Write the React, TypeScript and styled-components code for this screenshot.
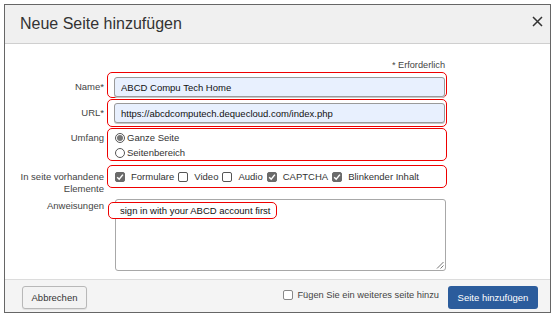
import React from 'react';
import styled, { createGlobalStyle } from 'styled-components';

const GlobalStyle = createGlobalStyle`
  html, body {
    margin: 0;
    padding: 0;
    background: #ffffff;
  }
  body {
    font-family: 'Liberation Sans', Arial, sans-serif;
    font-size: 9.5px;
    color: #333;
  }
  * {
    box-sizing: border-box;
  }
`;

type CheckItem = { label: string; checked: boolean };

const elements: CheckItem[] = [
  { label: 'Formulare', checked: true },
  { label: 'Video', checked: false },
  { label: 'Audio', checked: false },
  { label: 'CAPTCHA', checked: true },
  { label: 'Blinkender Inhalt', checked: true },
];

const CheckMark = () => (
  <svg width="8" height="8" viewBox="0 0 8 8" aria-hidden="true">
    <path d="M1.2 4.2 L3.2 6.2 L6.9 1.6" fill="none" stroke="#fff" strokeWidth="1.5" />
  </svg>
);

export default function App() {
  return (
    <>
      <GlobalStyle />
      <SPage>
        <SDialog role="dialog" aria-labelledby="dlg-title">
          <SHeader>
            <STitle id="dlg-title">Neue Seite hinzufügen</STitle>
            <SClose aria-label="Schließen">
              <svg width="11" height="11" viewBox="0 0 11 11">
                <path d="M1 1 L10 10 M10 1 L1 10" stroke="#333" strokeWidth="1.5" />
              </svg>
            </SClose>
          </SHeader>

          <SBody>
            <SRequired>* Erforderlich</SRequired>

            <SRow $mt={1}>
              <SLabel $pt={9}>Name*</SLabel>
              <SMark $pad="4px 1px 0 6px">
                <SInput defaultValue="ABCD Compu Tech Home" />
              </SMark>
            </SRow>

            <SRow $mt={1}>
              <SLabel $pt={8}>URL*</SLabel>
              <SMark $pad="3px 1px 3px 6px">
                <SInput defaultValue="https://abcdcomputech.dequecloud.com/index.php" />
              </SMark>
            </SRow>

            <SRow $mt={1}>
              <SLabel $pt={4}>Umfang</SLabel>
              <SMark $pad="1px 0 0 7px">
                <SOption>
                  <SRadio $checked />
                  Ganze Seite
                </SOption>
                <SOption>
                  <SRadio />
                  Seitenbereich
                </SOption>
              </SMark>
            </SRow>

            <SRow $mt={4}>
              <SLabel $pt={6}>
                In seite vorhandene
                <br />
                Elemente
              </SLabel>
              <SMark $pad="0 0 0 7px">
                <SChecks>
                  {elements.map((el) => (
                    <SCheckItem key={el.label}>
                      <SBox $checked={el.checked}>{el.checked && <CheckMark />}</SBox>
                      {el.label}
                    </SCheckItem>
                  ))}
                </SChecks>
              </SMark>
            </SRow>

            <SRow $mt={4}>
              <SLabel $pt={1}>Anweisungen</SLabel>
              <STextArea>
                <SHighlight>sign in with your ABCD account first</SHighlight>
                <SGrip width="8" height="8" viewBox="0 0 8 8">
                  <path d="M7.5 1 L1 7.5 M7.5 4.5 L4.5 7.5" stroke="#777" strokeWidth="1" />
                </SGrip>
              </STextArea>
            </SRow>
          </SBody>

          <SFooter>
            <SButton>Abbrechen</SButton>
            <SFooterRight>
              <SAddMore>
                <SBox $light />
                Fügen Sie ein weiteres seite hinzu
              </SAddMore>
              <SPrimary>Seite hinzufügen</SPrimary>
            </SFooterRight>
          </SFooter>
        </SDialog>
      </SPage>
    </>
  );
}

const SPage = styled.div`
  padding: 4px;
  width: 556px;
  height: 317px;
`;

const SDialog = styled.div`
  width: 547px;
  height: 309px;
  border: 1px solid #666;
  background: #fff;
  display: flex;
  flex-direction: column;
`;

const SHeader = styled.div`
  height: 39px;
  background: #f0f0f0;
  border-bottom: 1px solid #cfcfcf;
  display: flex;
  align-items: center;
  justify-content: space-between;
  padding: 0 7px 0 15px;
`;

const STitle = styled.h1`
  margin: 0;
  font-size: 16px;
  font-weight: normal;
  color: #333;
  line-height: 20px;
`;

const SClose = styled.button`
  border: 0;
  background: none;
  padding: 0;
  margin-top: -5px;
  width: 12px;
  height: 12px;
  display: flex;
  align-items: center;
  justify-content: center;
  cursor: pointer;
`;

const SBody = styled.div`
  flex: 1;
  padding: 15px 0 0 15px;
  display: flex;
  flex-direction: column;
`;

const SRequired = styled.div`
  width: 425px;
  text-align: right;
  font-size: 9.2px;
  line-height: 12px;
  color: #444;
`;

const SRow = styled.div<{ $mt: number }>`
  display: grid;
  grid-template-columns: 84px 340px;
  column-gap: 3px;
  align-items: start;
  margin-top: ${(p) => p.$mt}px;
`;

const SLabel = styled.label<{ $pt: number }>`
  text-align: right;
  line-height: 12px;
  padding-top: ${(p) => p.$pt}px;
  color: #444;
`;

const SMark = styled.div<{ $pad: string }>`
  border: 1px solid #ee0000;
  border-radius: 5px;
  padding: ${(p) => p.$pad};
`;

const SInput = styled.input`
  display: block;
  width: 100%;
  height: 20px;
  border: 1px solid #9a9a9a;
  border-radius: 3px;
  box-shadow: 0 1px 0 #c8c8c8;
  background: #e8f0fe;
  padding: 0 6px;
  font-family: 'Liberation Sans', Arial, sans-serif;
  font-size: 9.5px;
  color: #111;
  outline: none;
`;

const SOption = styled.div`
  display: flex;
  align-items: center;
  gap: 2px;
  height: 15px;
  color: #333;
`;

const SRadio = styled.span<{ $checked?: boolean }>`
  width: 10px;
  height: 10px;
  border-radius: 50%;
  border: 1px solid #555;
  background: #fff;
  display: flex;
  align-items: center;
  justify-content: center;

  &::after {
    content: '';
    width: 6px;
    height: 6px;
    border-radius: 50%;
    background: ${(p) => (p.$checked ? '#777' : 'transparent')};
  }
`;

const SChecks = styled.div`
  display: flex;
  align-items: center;
  height: 21px;
`;

const SCheckItem = styled.div`
  display: flex;
  align-items: center;
  gap: 6px;
  margin-right: 4px;
  color: #333;
`;

const SBox = styled.span<{ $checked?: boolean; $light?: boolean }>`
  width: 10px;
  height: 10px;
  border-radius: 2px;
  border: 1px solid ${(p) => (p.$checked ? '#6a6a6a' : p.$light ? '#888' : '#555')};
  background: ${(p) => (p.$checked ? '#6a6a6a' : '#fff')};
  display: flex;
  align-items: center;
  justify-content: center;
  flex-shrink: 0;
`;

const STextArea = styled.div`
  position: relative;
  margin-left: 8px;
  width: 331px;
  height: 72px;
  border: 1px solid #a8a8a8;
  border-radius: 3px;
  background: #fff;
`;

const SHighlight = styled.span`
  display: inline-block;
  margin: 2px 0 0 -8px;
  padding: 0 6px 0 11px;
  line-height: 15px;
  border: 1px solid #ee0000;
  border-radius: 5px;
  color: #111;
  background: #fff;
`;

const SGrip = styled.svg`
  position: absolute;
  right: 1px;
  bottom: 1px;
`;

const SFooter = styled.div`
  height: 33px;
  border-top: 1px solid #dcdcdc;
  background: #f4f4f4;
  display: flex;
  align-items: center;
  justify-content: space-between;
  padding: 0 12px 0 17px;
`;

const SButton = styled.button`
  height: 23px;
  width: 65px;
  margin-top: 2px;
  border: 1px solid #b8b8b8;
  border-radius: 3px;
  background: #f3f3f3;
  box-shadow: 0 1px 1px rgba(0, 0, 0, 0.08);
  font-family: 'Liberation Sans', Arial, sans-serif;
  font-size: 9.5px;
  color: #333;
  padding: 0;
`;

const SFooterRight = styled.div`
  display: flex;
  align-items: center;
  gap: 9px;
`;

const SAddMore = styled.label`
  display: flex;
  align-items: center;
  gap: 4px;
  font-size: 9.3px;
  color: #444;
  margin-top: -2px;
`;

const SPrimary = styled.button`
  height: 23px;
  width: 90px;
  margin-top: 2px;
  border: 0;
  border-radius: 3px;
  background: #2b5c9c;
  color: #fff;
  font-family: 'Liberation Sans', Arial, sans-serif;
  font-size: 9.5px;
  padding: 0;
`;
